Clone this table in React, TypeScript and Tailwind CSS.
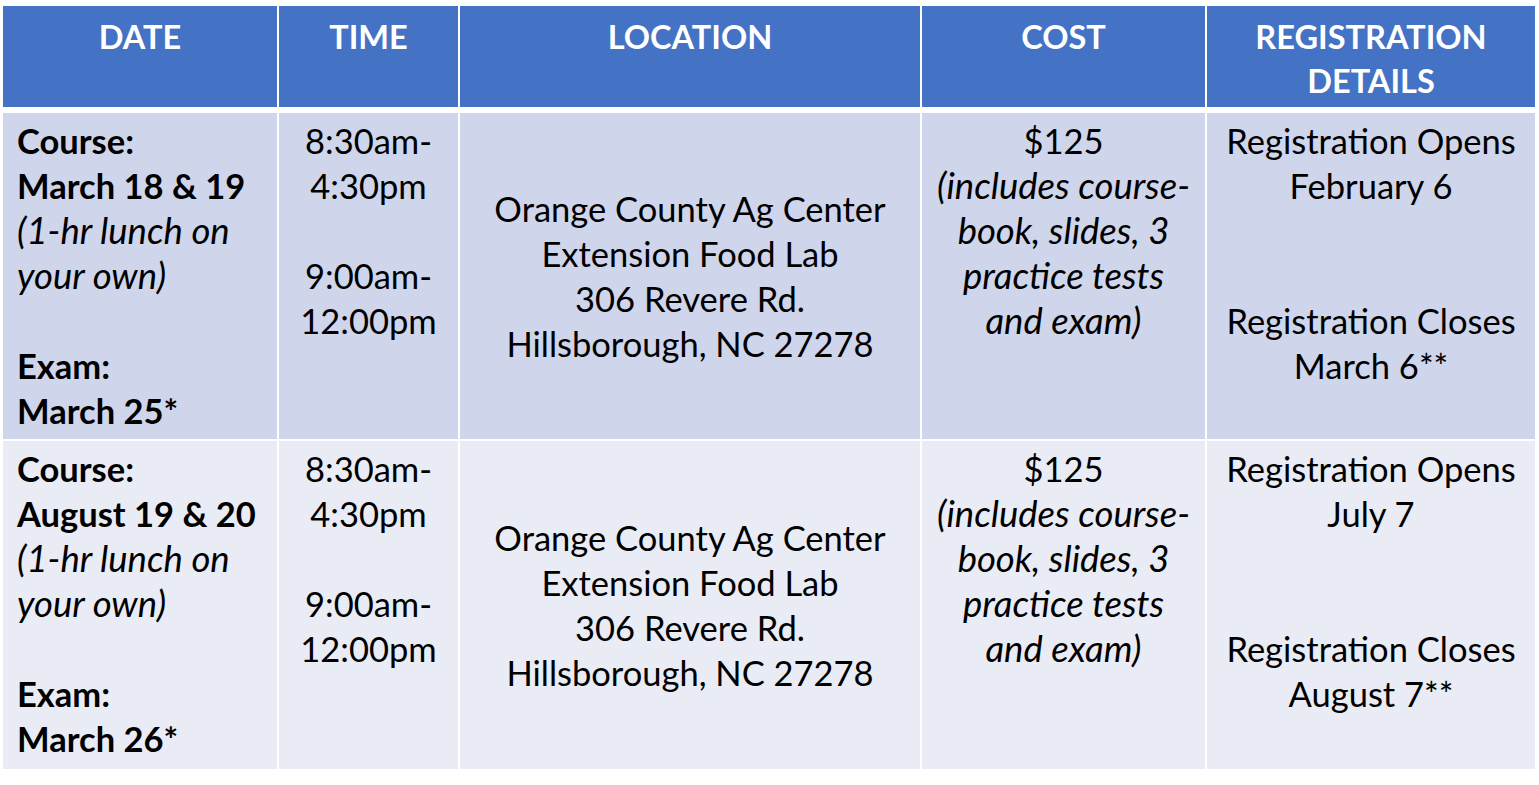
const rows = [
  {
    bg: 'bg-[#CFD5EA]',
    h: 'h-[326px]',
    date: { course: 'March 18 & 19', exam: 'March 25*' },
    reg: { opens: 'February 6', closes: 'March 6**' },
  },
  {
    bg: 'bg-[#E9EBF5]',
    h: 'h-[328px]',
    date: { course: 'August 19 & 20', exam: 'March 26*' },
    reg: { opens: 'July 7', closes: 'August 7**' },
  },
]

const cols = 'grid grid-cols-[274px_179px_460px_283px_328px] gap-x-[2px]'
const it = 'italic text-[36.5px]'
const Blank = () => <div>&nbsp;</div>

export default function App() {
  return (
    <div
      className="w-[1539px] h-[785px] bg-white pl-[3px] pt-[6px] text-black text-[34.5px] leading-[45px]"
      style={{ fontFamily: 'Lato, "Open Sans", sans-serif' }}
    >
      <div className={`${cols} h-[101px] mb-[6px] bg-white text-[32.5px]`}>
        {['DATE', 'TIME', 'LOCATION', 'COST'].map((t) => (
          <div key={t} className="bg-[#4472C4] text-white font-bold text-center pt-[9px] leading-[44px]">
            {t}
          </div>
        ))}
        <div className="bg-[#4472C4] text-white font-bold text-center pt-[9px] leading-[44px]">
          REGISTRATION
          <br />
          DETAILS
        </div>
      </div>

      {rows.map((r, i) => (
        <div key={i} className={`${cols} ${r.h} ${i === 0 ? 'mb-[2px]' : ''}`}>
          <div className={`${r.bg} pl-[14px] pt-[5px]`}>
            <div className="font-bold">Course:</div>
            <div className="font-bold">{r.date.course}</div>
            <div className={it}>(1-hr lunch on</div>
            <div className={it}>your own)</div>
            <Blank />
            <div className="font-bold">Exam:</div>
            <div className="font-bold">{r.date.exam}</div>
          </div>
          <div className={`${r.bg} text-center pt-[5px]`}>
            <div>8:30am-</div>
            <div>4:30pm</div>
            <Blank />
            <div>9:00am-</div>
            <div>12:00pm</div>
          </div>
          <div className={`${r.bg} text-center flex flex-col justify-center`}>
            <div>Orange County Ag Center</div>
            <div>Extension Food Lab</div>
            <div>306 Revere Rd.</div>
            <div>Hillsborough, NC 27278</div>
          </div>
          <div className={`${r.bg} text-center pt-[5px]`}>
            <div>$125</div>
            <div className={it}>(includes course-</div>
            <div className={it}>book, slides, 3</div>
            <div className={it}>practice tests</div>
            <div className={it}>and exam)</div>
          </div>
          <div className={`${r.bg} text-center pt-[5px]`}>
            <div>Registration Opens</div>
            <div>{r.reg.opens}</div>
            <Blank />
            <Blank />
            <div>Registration Closes</div>
            <div>{r.reg.closes}</div>
          </div>
        </div>
      ))}
    </div>
  )
}
